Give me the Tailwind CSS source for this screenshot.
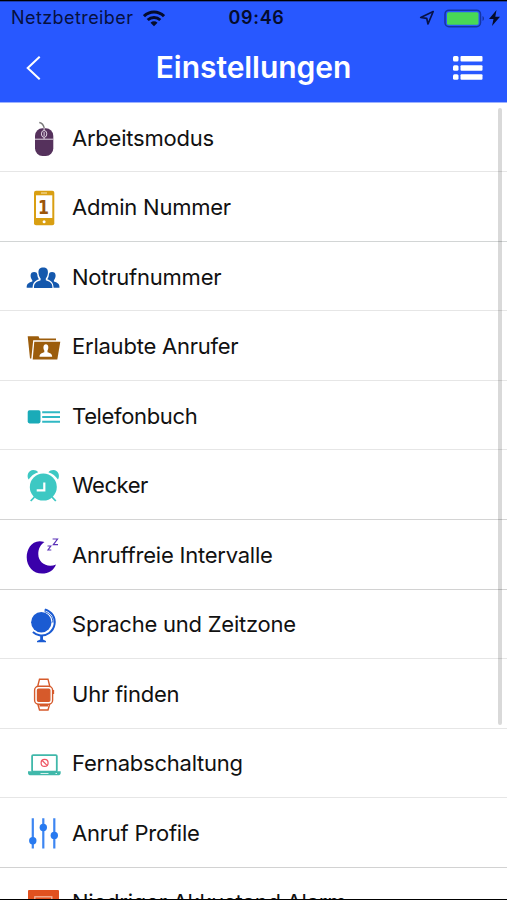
<!DOCTYPE html>
<html lang="de">
<head>
<meta charset="utf-8">
<title>Einstellungen</title>
<script src="https://cdn.jsdelivr.net/npm/@tailwindcss/browser@4"></script>
</head>
<body class="bg-white">
<div class="relative flex h-[900px] w-[507px] flex-col overflow-hidden border-t border-b border-black bg-white font-['Inter','Liberation_Sans',sans-serif]">
  <header class="flex h-[101.7px] shrink-0 flex-col border-t border-b border-t-[#1c3cae] border-b-[#9db2ff] bg-[#2858ff]">
    <div class="grid h-[33px] grid-cols-[1fr_auto_1fr] items-center pl-[11px] pr-[7px] text-[18px] leading-none text-[#061040]">
      <div class="flex items-center gap-[10px]">
        <span class="tracking-[0.42px]">Netzbetreiber</span>
        <svg class="h-[17px] w-[22px]" viewBox="0 0 22 17" fill="none" stroke="#050c2c" stroke-width="3"><path d="M1 6.200C6.800.7 15.200.7 21 6.200"/><path d="M4.700 10C8.300 6.600 13.700 6.600 17.300 10"/><path d="M11 16.200 7.500 12.700C9.500 10.900 12.500 10.900 14.500 12.700Z" fill="#050c2c" stroke="none"/></svg>
      </div>
      <span class="pl-0.5 font-semibold tracking-[0.7px] text-[#050c2c]">09:46</span>
      <div class="flex items-center justify-end">
        <svg class="h-4 w-4" viewBox="0 0 16 16" fill="none" stroke="#071248" stroke-width="1.700" stroke-linejoin="round"><path d="M14.200 1.500 1.700 7.500 7.700 8.300 9 14Z"/></svg>
        <svg class="ml-[9px] h-[19px] w-[41px]" viewBox="0 0 41 19"><rect x="1" y="1.200" width="35.500" height="16.500" rx="4" fill="none" stroke="#1434a4" stroke-width="1.500"/><rect x="3" y="3.200" width="31.500" height="12.500" rx="1.500" fill="#48d856"/><path d="M38.500 7C40.500 7.700 40.500 11.300 38.500 12Z" fill="#1434a4"/></svg>
        <svg class="ml-1 h-4 w-[11px]" viewBox="0 0 11 16" fill="#050c2c"><path d="M7.500 0 0 9H4.500L3 16 11 6.700H6.300Z"/></svg>
      </div>
    </div>
    <div class="grid h-[67px] grid-cols-[1fr_auto_1fr] items-center pl-[26px] pr-6">
      <svg class="h-6 w-[15px]" viewBox="0 0 15 24" fill="none" stroke="#fff" stroke-width="2"><path d="M13.700.7 1.700 12 13.700 23.300"/></svg>
      <h1 class="pb-0.5 pr-0.5 text-[30px] font-semibold leading-none tracking-[-0.05px] text-white">Einstellungen</h1>
      <svg class="h-6 w-[30px] justify-self-end" viewBox="0 0 30 24" fill="#fff"><rect x="0" y="0" width="5.500" height="5.500" rx="1.500"/><rect x="7.500" y="0" width="22" height="5.500" rx="1"/><rect x="0" y="9.200" width="5.500" height="5.500" rx="1.500"/><rect x="7.500" y="9.200" width="22" height="5.500" rx="1"/><rect x="0" y="18.300" width="5.500" height="5.500" rx="1.500"/><rect x="7.500" y="18.300" width="22" height="5.500" rx="1"/></svg>
    </div>
  </header>
  <ul class="flex flex-col text-[22px] leading-none tracking-[-0.23px] text-[#111]">
    <li class="flex h-[69.55px] shrink-0 items-center gap-[9px] border-b border-[#e6e6e6] pl-[23px]">
      <svg class="size-10" viewBox="0 0 40 40"><path d="M16.300 5.500C19 6 20.500 7 21.300 11.500" fill="none" stroke="#777" stroke-width="1.400"/><rect x="12" y="11.200" width="18.300" height="27.700" rx="7.500" fill="#55315c"/><path d="M12 22.200H30.300M21.100 11V22" fill="none" stroke="#e4d9e6" stroke-width="1"/><ellipse cx="21.100" cy="16.900" rx="2.700" ry="3.400" fill="#55315c" stroke="#e4d9e6" stroke-width="1"/><path d="M21.100 15V19" stroke="#e4d9e6"/></svg>
      <span class="pt-[1.500px]">Arbeitsmodus</span>
    </li>
    <li class="flex h-[69.55px] shrink-0 items-center gap-[9px] border-b border-[#d2d5d5] pl-[23px]">
      <svg class="size-10" viewBox="0 0 40 40"><rect x="11" y="3.700" width="20.300" height="34.600" rx="2" fill="#d99f12"/><rect x="13" y="8.300" width="16.300" height="22.700" fill="#fff"/><path d="M18 6H24" stroke="#f7e6b8" stroke-width="1"/><circle cx="21.100" cy="34.800" r="1.500" fill="#fff"/><text x="20.600" y="27" text-anchor="middle" font-family="DejaVu Sans" font-weight="bold" font-size="19" letter-spacing="0" textLength="11" lengthAdjust="spacingAndGlyphs" fill="#9b560b">1</text></svg>
      <span class="pt-px">Admin Nummer</span>
    </li>
    <li class="flex h-[69.55px] shrink-0 items-center gap-[9px] border-b border-[#e6e6e6] pl-[23px]">
      <svg class="size-10" viewBox="0 0 40 40" fill="#1458ad"><path d="M11 32.100C10.800 27.500 12.500 26.200 17.600 24.300V22.500C16.300 21 15.700 19 15.500 17C15.200 13 17 11.400 20.200 11.400S25.200 13 24.900 17C24.700 19 24.100 21 22.800 22.500V24.300C27.900 26.200 29.600 27.500 29.400 32.100Z"/><path d="M3.700 31.700C3.500 28 5 27 9.300 25.500V24.200C8 22.500 7.600 21 7.600 19.500C7.600 17 9 16 11.200 16C13 16 14.200 16.800 14.300 18.500C14.500 20.500 15 22 16 23.300C12 25 10 26.200 9.600 31.700ZM36.500 31.700C36.700 28 35.200 27 30.900 25.500V24.200C32.200 22.500 32.600 21 32.600 19.500C32.600 17 31.200 16 29 16C27.200 16 26 16.800 25.900 18.500C25.700 20.500 25.200 22 24.200 23.300C28.200 25 30.200 26.200 30.600 31.700Z"/></svg>
      <span class="pt-0.5">Notrufnummer</span>
    </li>
    <li class="flex h-[69.55px] shrink-0 items-center gap-[9px] border-b border-[#e6e6e6] pl-[23px]">
      <svg class="size-10" viewBox="0 0 40 40"><path d="M4.700 10.200H15.500L16.500 12.500H33V14.200H10.200L8.300 32.500H7Z" fill="#9c5d0c"/><path d="M11.300 15.800H37.300L34.300 33.500H9.700Z" fill="#9c5d0c"/><path d="M16.500 30.800C16.600 27.800 18.500 27.300 21.300 26.300V24.500C20 22.500 19.900 18.200 22.900 18.200S25.800 22.500 24.500 24.500V26.300C27.300 27.300 29.100 27.800 29.200 30.800Z" fill="#fff"/></svg>
      <span class="pt-px">Erlaubte Anrufer</span>
    </li>
    <li class="flex h-[69.55px] shrink-0 items-center gap-[9px] border-b border-[#e6e6e6] pl-[23px]">
      <svg class="size-10" viewBox="0 0 40 40"><rect x="4.700" y="15.200" width="12.800" height="13.200" rx="1.800" fill="#1aabb8"/><path d="M19.200 17.300H37M19.200 22H37M19.200 26.800H37" stroke="#30b8c4" stroke-width="2.100"/></svg>
      <span class="pt-0.5 tracking-[-0.35px]">Telefonbuch</span>
    </li>
    <li class="flex h-[69.55px] shrink-0 items-center gap-[9px] border-b border-[#d4d4d4] pl-[23px]">
      <svg class="size-10" viewBox="0 0 40 40"><path d="M11.500 32 7.700 36M29 32 32.800 36" stroke="#3dc8c3" stroke-width="1.800"/><circle cx="20.300" cy="22.100" r="13.500" fill="#3dc8c3"/><path d="M5.600 14.600C3.200 10.300 5.500 5 10.200 5C12.400 5 14 5.800 15.200 7.200C11 8.500 8 11 5.600 14.600ZM35 14.600C37.400 10.300 35.100 5 30.400 5C28.200 5 26.600 5.800 25.400 7.200C29.600 8.500 32.600 11 35 14.600Z" fill="#3dc8c3"/><path d="M21.300 17.500V25.300H13.700" fill="none" stroke="#fff" stroke-width="2.200"/></svg>
      <span class="pt-px tracking-[-0.45px]">Wecker</span>
    </li>
    <li class="flex h-[69.55px] shrink-0 items-center gap-[9px] border-b border-[#d2d2d2] pl-[23px]">
      <svg class="size-10" viewBox="0 0 40 40"><path d="M21.500 8C9.500 4.200 3.700 14.700 3.700 23.200C3.700 32.700 10.500 39.600 19 39.600C25.500 39.600 31 36.200 33 30.500C24 34.200 15.300 28.700 15.300 20.200C15.300 14.700 17.500 10.500 21.500 8Z" fill="#3a00aa"/><path d="M24.500 12H27.800L25 16H28.300M29.600 5H34.500L30.300 10.700H35" fill="none" stroke="#5b32b8" stroke-width="1.200"/></svg>
      <span class="pt-px">Anruffreie Intervalle</span>
    </li>
    <li class="flex h-[69.55px] shrink-0 items-center gap-[9px] border-b border-[#e6e6e6] pl-[23px]">
      <svg class="size-10" viewBox="0 0 40 40"><circle cx="18.300" cy="18.200" r="10.200" fill="#1b5bd2"/><path d="M22 5.300C29 7.500 32.600 13.500 31.600 20C30.500 27.500 23.500 32.500 16.500 31.200C13.700 30.800 11.500 29.500 9.900 28" fill="none" stroke="#1b5bd2" stroke-width="1.900"/><path d="M22.300 5 22 7.800C27 9.500 30.300 13.500 29.800 18.500" fill="none" stroke="#1b5bd2" stroke-width="1"/><path d="M17.200 31H20V35.500L23 37V38.300H14V37L17.200 35.500Z" fill="#1b5bd2"/></svg>
      <span class="pt-px">Sprache und Zeitzone</span>
    </li>
    <li class="flex h-[69.55px] shrink-0 items-center gap-[9px] border-b border-[#e6e6e6] pl-[23px]">
      <svg class="size-10" viewBox="0 0 40 40" fill="none" stroke="#d65a2b" stroke-width="1.400"><path d="M14.800 13 16.500 6.200H25L26.700 13M14.800 31 16.500 37H25L26.700 31M16.500 32.800H25"/><rect x="11.600" y="13.200" width="18" height="18" rx="4"/><rect x="14.500" y="16.300" width="12.300" height="12" rx="1" fill="#d65a2b"/><path d="M30.400 17V21" stroke-width="1.500"/></svg>
      <span class="pt-px">Uhr finden</span>
    </li>
    <li class="flex h-[69.55px] shrink-0 items-center gap-[9px] border-b border-[#e6e6e6] pl-[23px]">
      <svg class="size-10" viewBox="0 0 40 40"><rect x="9.100" y="12.100" width="24.700" height="16.500" rx="1" fill="#fff" stroke="#40b8aa" stroke-width="1.800"/><path d="M5 28.300H37.700V30C37.700 31.500 36.500 32.300 35 32.300H7.700C6.200 32.300 5 31.500 5 30Z" fill="#40b8aa"/><path d="M17.500 30.500H25.500M32.500 30.500H34" stroke="#d9f2ee" stroke-width="1"/><circle cx="21.600" cy="19.900" r="3.500" fill="none" stroke="#ee5260" stroke-width="1.200"/><path d="M19.200 17.500 24 22.300" stroke="#ee5260" stroke-width="1.200"/></svg>
      <span class="pt-px">Fernabschaltung</span>
    </li>
    <li class="flex h-[69.55px] shrink-0 items-center gap-[9px] border-b border-[#d2d2d2] pl-[23px]">
      <svg class="size-10" viewBox="0 0 40 40" fill="#287af0"><path d="M9.800 6.300V36.500M20.300 6.300V36.500M31.300 6.300V36.500" stroke="#3d86f2" stroke-width="2.200"/><circle cx="9.800" cy="28.800" r="3.700"/><circle cx="20.300" cy="15.500" r="3.700"/><circle cx="31.300" cy="23.400" r="3.700"/></svg>
      <span class="pt-px">Anruf Profile</span>
    </li>
    <li class="flex h-[69.55px] shrink-0 items-center gap-[9px] pl-[23px]">
      <svg class="size-10" viewBox="0 0 40 40"><rect x="5" y="8" width="31" height="30" rx="1" fill="#e1511f"/><rect x="11.800" y="14.800" width="17" height="17" fill="none" stroke="#f5b59c" stroke-width="1.300"/></svg>
      <span class="pb-px">Niedriger Akkustand Alarm</span>
    </li>
  </ul>
  <div class="absolute left-[498px] top-[107px] h-[617px] w-1 rounded-full bg-black/15"></div>
</div>
</body>
</html>
